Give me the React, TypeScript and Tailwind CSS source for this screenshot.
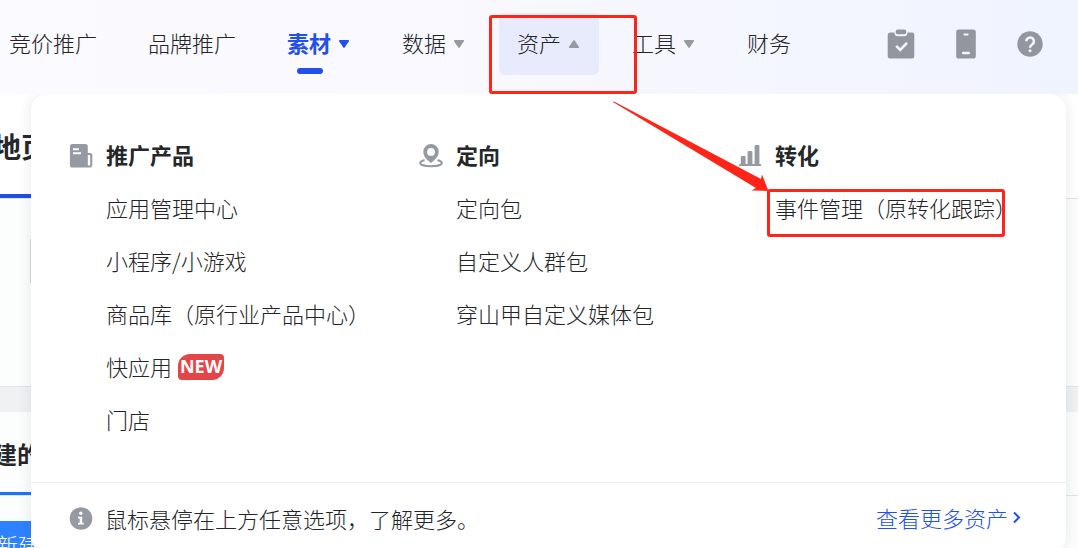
import type { ReactNode } from "react";

type NavItem = { label: string; caret?: "down" | "up"; active?: boolean; open?: boolean };

const navItems: NavItem[] = [
  { label: "竞价推广" },
  { label: "品牌推广" },
  { label: "素材", caret: "down", active: true },
  { label: "数据", caret: "down" },
  { label: "资产", caret: "up", open: true },
  { label: "工具", caret: "down" },
  { label: "财务" },
];

function Caret({ direction }: { direction: "down" | "up" }) {
  return (
    <svg width="12" height="10" viewBox="0 0 12 10" fill="currentColor" stroke="currentColor" strokeWidth="1.5" strokeLinejoin="round" aria-hidden="true">
      <path d={direction === "down" ? "M1.7 1.8h8.6L6 8.2Z" : "M1.7 8.2h8.6L6 1.8Z"} />
    </svg>
  );
}

function NavButton({ label, caret, active, open }: NavItem) {
  const tone = active ? "font-bold text-[#2250e8]" : "font-light text-[#222428]";
  return (
    <button type="button" className={`relative flex h-[62px] shrink-0 items-center gap-[7px] rounded-md px-[18px] ${tone} ${caret ? "min-w-[100px]" : ""} ${open ? "bg-[#e7ebfc]" : ""}`}>
      <span className="pb-1">{label}</span>
      {caret && (
        <span className={active ? "text-[#2250e8]" : "text-[#9599a1]"}>
          <Caret direction={caret} />
        </span>
      )}
      {active && <span className="absolute bottom-px left-7 h-1.5 w-[26px] rounded-full bg-[#2250e8]" />}
      {open && <span className="absolute -left-[10px] top-0.5 z-20 h-[79px] w-[148px] rounded-[3px] border-3 border-[#ff2418]" />}
    </button>
  );
}

function ClipboardIcon() {
  return (
    <svg width="28" height="30" viewBox="0 0 28 30" aria-hidden="true">
      <path d="M3 3.5h4.5c0 2.3 1 3.7 3.2 3.7h6.6c2.2 0 3.2-1.4 3.2-3.7H25A2.3 2.3 0 0 1 27.300 6v21.200A2.300 2.300 0 0 1 25 29.500H3A2.300 2.300 0 0 1 .7 27.200V6A2.500 2.500 0 0 1 3 3.500Z" fill="#93969f" />
      <rect x="8.6" y="0.5" width="10.8" height="4.8" rx="2.4" fill="#93969f" />
      <path d="m9.200 16.800 4 4 6.800-7" fill="none" stroke="#f3f6ff" strokeWidth="2.6" />
    </svg>
  );
}

function PhoneIcon() {
  return (
    <svg width="20" height="30" viewBox="0 0 20 30" aria-hidden="true">
      <rect x="0.2" y="0.5" width="19.6" height="29" rx="2.6" fill="#93969f" />
      <rect x="7.4" y="4.4" width="5.2" height="2.2" rx="1.1" fill="#f3f6ff" />
      <rect x="6" y="22.8" width="8" height="2.4" rx="1.2" fill="#f3f6ff" />
    </svg>
  );
}

function HelpIcon() {
  return (
    <svg width="26" height="26" viewBox="0 0 26 26" aria-hidden="true">
      <circle cx="13" cy="13" r="12.7" fill="#93969f" />
      <path d="M9.300 10.300a3.800 3.800 0 1 1 5.800 3.200c-1.400.9-2.100 1.400-2.100 3.200" fill="none" stroke="#f3f6ff" strokeWidth="2.5" />
      <circle cx="13" cy="19.8" r="1.5" fill="#f3f6ff" />
    </svg>
  );
}

function ProductIcon() {
  return (
    <svg width="24" height="24" viewBox="0 0 24 24" aria-hidden="true">
      <path d="M3.500 0h12.700a2.600 2.600 0 0 1 2.600 2.600V9h2.200a2.300 2.300 0 0 1 2.300 2.300v9.400a2.800 2.800 0 0 1-2.800 2.800H3.500A2.600 2.600 0 0 1 .9 20.900V2.600A2.600 2.600 0 0 1 3.500 0Z" fill="#9599a2" />
      <path d="M4 5.200h5.800M4 9.200h8" stroke="#fff" strokeWidth="1.9" />
      <path d="M18.800 11h1.600a.8.8 0 0 1 .8.8v8.600a1.200 1.200 0 0 1-2.400 0Z" fill="#fff" />
    </svg>
  );
}

function LocationIcon() {
  return (
    <svg width="24" height="24" viewBox="0 0 24 24" aria-hidden="true">
      <path d="M5.500 16.200C2.900 16.700 1.200 17.600 1.200 18.900c0 1.900 4.700 3.300 10.800 3.300s10.800-1.400 10.800-3.300c0-1.300-1.700-2.200-4.300-2.700" fill="none" stroke="#9599a2" strokeWidth="2" />
      <path fillRule="evenodd" d="M12 0a7.700 7.700 0 0 1 7.700 7.700c0 4.600-3.600 8.200-7.700 11.300-4.100-3.100-7.700-6.700-7.700-11.300A7.700 7.700 0 0 1 12 0Zm0 4a3.900 3.900 0 1 0 0 7.800A3.900 3.900 0 0 0 12 4Z" fill="#9599a2" />
    </svg>
  );
}

function ChartIcon() {
  return (
    <svg width="24" height="24" viewBox="0 0 24 24" fill="#9599a2" aria-hidden="true">
      <rect x="2.8" y="12" width="4.8" height="9" rx="1" />
      <rect x="9.6" y="7" width="4.8" height="14" rx="1" />
      <rect x="16.6" y="1" width="4.8" height="20" rx="1" />
      <rect x="1" y="20" width="22.3" height="2" rx="1" />
    </svg>
  );
}

function InfoIcon() {
  return (
    <svg width="24" height="24" viewBox="0 0 24 24" aria-hidden="true">
      <circle cx="12" cy="12.5" r="11.3" fill="#9599a2" />
      <circle cx="11.8" cy="7.3" r="1.7" fill="#fff" />
      <path d="M9 10.800h4.200v6h1.600v1.700H9v-1.700h1.700v-4.300H9Z" fill="#fff" />
    </svg>
  );
}

function Group({ icon, title, children }: { icon: ReactNode; title: string; children: ReactNode }) {
  return (
    <section className="flex items-start gap-[13px] whitespace-nowrap leading-[53px]">
      <span className="flex h-[53px] w-6 shrink-0 items-center pt-0.5">{icon}</span>
      <div>
        <h2 className="font-bold text-[#25272b]">{title}</h2>
        <ul className="font-light text-[#222428]">{children}</ul>
      </div>
    </section>
  );
}

function Item({ children }: { children: ReactNode }) {
  return (
    <li>
      <a href="#" className="flex items-center gap-1.5">{children}</a>
    </li>
  );
}

function AssetMenu() {
  return (
    <div className="absolute left-[31px] right-3 top-[94px] z-10 rounded-2xl bg-white shadow-[0_0_14px_rgba(30,35,50,0.10)]">
      <div className="grid grid-cols-[350fr_319fr_328fr] pb-9 pl-[38px] pt-[34px]">
        <Group icon={<ProductIcon />} title="推广产品">
          <Item>应用管理中心</Item>
          <Item>小程序/小游戏</Item>
          <Item>商品库（原行业产品中心）</Item>
          <Item>
            快应用
            <span className="flex h-[26px] w-[46px] items-center justify-center rounded-bl-sm rounded-br-xl rounded-tl-xl rounded-tr-sm bg-[#e34548] pb-0.5 font-['Open_Sans',sans-serif] text-lg font-bold leading-none text-white">
              NEW
            </span>
          </Item>
          <Item>门店</Item>
        </Group>
        <Group icon={<LocationIcon />} title="定向">
          <Item>定向包</Item>
          <Item>自定义人群包</Item>
          <Item>穿山甲自定义媒体包</Item>
        </Group>
        <Group icon={<ChartIcon />} title="转化">
          <li className="relative">
            <a href="#">事件管理（原转化跟踪）</a>
            <span className="absolute -left-2 top-2 h-12 w-[238px] rounded-[3px] border-3 border-[#ff2418]" />
            <svg className="absolute -left-[163px] -top-[81px]" width="160" height="94" viewBox="0 0 160 94" aria-hidden="true">
              <path d="M1 2 2 1.500 149 79l1-4.500L156.500 91l-17-.5 4.500-2.500Z" fill="#ff2418" />
            </svg>
          </li>
        </Group>
      </div>
      <div className="flex h-[71px] items-center justify-between border-t border-[#eff0f2] pb-px pl-[38px] pr-11 font-light">
        <p className="flex items-center gap-3 text-[#222428]">
          <InfoIcon />
          鼠标悬停在上方任意选项，了解更多。
        </p>
        <a href="#" className="flex items-center gap-1 pb-0.5 text-[#2250e8]">
          查看更多资产
          <svg width="10" height="14" viewBox="0 0 10 14" fill="none" stroke="currentColor" strokeWidth="2" aria-hidden="true">
            <path d="m2 2.500 5 5-5 5" />
          </svg>
        </a>
      </div>
    </div>
  );
}

export default function App() {
  return (
    <div className="relative h-screen overflow-hidden bg-[#eff1f3] font-['Noto_Sans_CJK_SC','Noto_Sans_CJK_JP',sans-serif] text-[22px] leading-8">
      <header className="relative z-20 flex h-[94px] items-start justify-between bg-linear-to-r from-[#fafaff] via-[#f8f8fe] via-45% to-[#f0f4ff] pr-[35px] pt-[13px]">
        <nav className="-ml-[9px] flex gap-[15px] whitespace-nowrap">
          {navItems.map((item) => (
            <NavButton key={item.label} {...item} />
          ))}
        </nav>
        <div className="flex h-[62px] items-center gap-[41px]">
          <button type="button" aria-label="任务"><ClipboardIcon /></button>
          <button type="button" aria-label="手机"><PhoneIcon /></button>
          <button type="button" aria-label="帮助"><HelpIcon /></button>
        </div>
      </header>

      <AssetMenu />

      <main className="flex flex-col gap-[25px] whitespace-nowrap font-bold text-[#25272b]">
        <section className="h-[293px] border-b border-[#e0e4e9] bg-[#fcfdfd]">
          <div className="flex h-[105px] border-b border-[#e3e5e8] bg-white">
            <h1 className="-ml-[35px] border-b-4 border-[#1d4fe6] pt-8 text-[28px] leading-10">落地页</h1>
          </div>
          <div className="ml-[30px] mt-10 h-11 w-32 border border-[#d5d8dc]" />
        </section>
        <section className="bg-[#fcfdfd]">
          <div className="flex h-[84px] border-b border-[#dde3ea]">
            <h2 className="-ml-[31px] border-b-3 border-[#1b75fb] pt-[26px] text-2xl">创建的内容</h2>
          </div>
          <button type="button" className="-ml-[26px] mt-[25px] h-[46px] bg-[#2f82ff] px-[22px] font-light text-white">新建页面</button>
        </section>
      </main>
    </div>
  );
}
